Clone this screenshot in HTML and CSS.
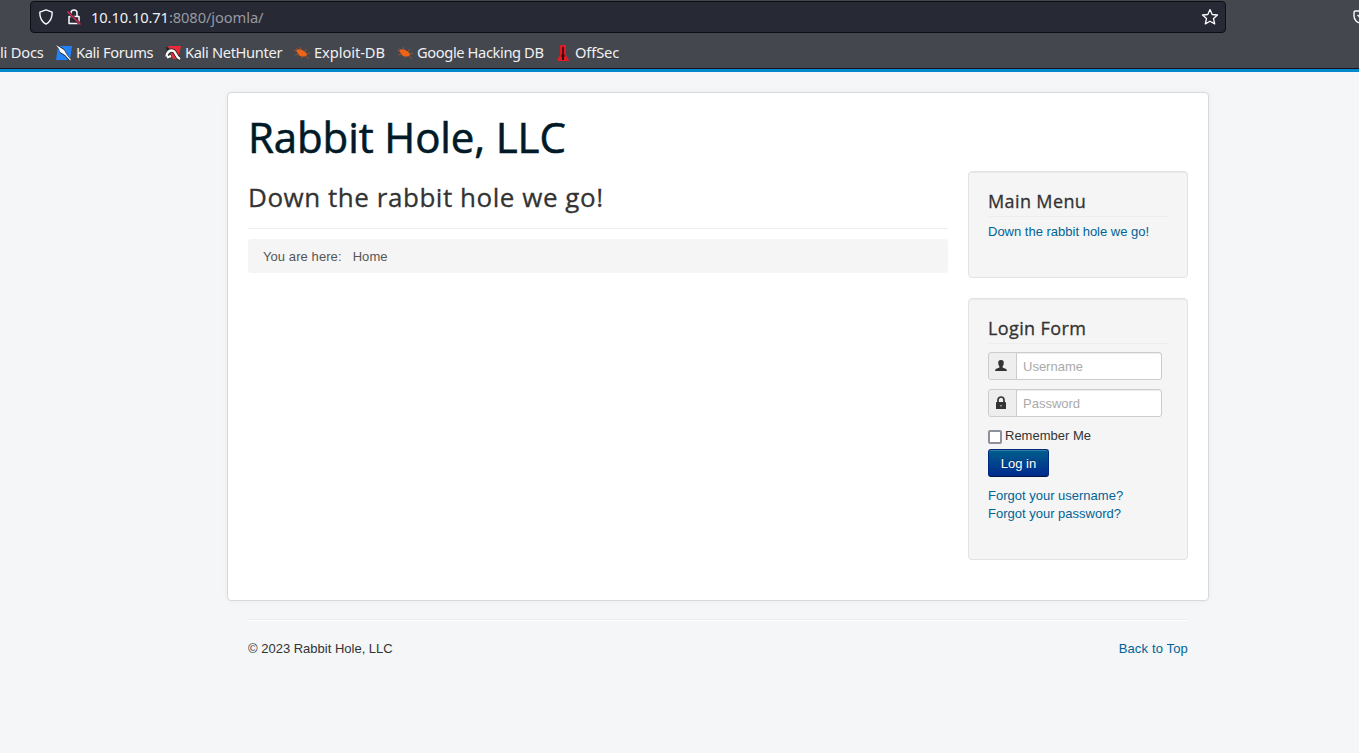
FILE: index.html
```html
<!DOCTYPE html>
<html lang="en">
<head>
<meta charset="utf-8">
<title>Home</title>
<link rel="stylesheet" href="styles.css">
</head>
<body>
<header class="browser">
  <div class="toolbar">
    <div class="urlbar">
      <svg class="shield" width="16" height="16" viewBox="0 0 16 16"><path d="M8 .9 14.2 3.2C14.3 8.400 12.300 12.700 8 15.100 3.700 12.700 1.700 8.400 1.800 3.200z" fill="none" stroke="#fbfbfe" stroke-width="1.400" stroke-linejoin="round"/></svg>
      <svg class="insecure" width="16" height="16" viewBox="0 0 16 16"><path d="M5 7V4a3 3 0 0 1 6 0v3M3 7.500h10v7H3z" fill="none" stroke="#fbfbfe" stroke-width="1.500" stroke-linejoin="round"/><path d="m1.500 2.500 13 13" stroke="#272935" stroke-width="3"/><path d="m1.500 2.500 13 13" stroke="#e22850" stroke-width="1.500"/></svg>
      <span class="url"><b>10.10.10.71</b><span>:8080/joomla/</span></span>
      <svg class="star" width="18" height="18" viewBox="0 0 18 18"><path d="m9 1.600 2.200 4.900 5.300.5-4 3.500 1.200 5.400L9 13.200l-4.700 2.700 1.200-5.400-4-3.500 5.300-.5z" fill="none" stroke="#fbfbfe" stroke-width="1.300" stroke-linejoin="round"/></svg>
    </div>
    <svg class="pocket" width="16" height="16" viewBox="0 0 16 16"><path d="M2.500 2h11q1.500 0 1.500 1.500v3.500a7 7 0 0 1-14 0V3.500Q1 2 2.500 2zM4.500 6 8 9l3.500-3" fill="none" stroke="#fbfbfe" stroke-width="1.400"/></svg>
  </div>
  <nav class="bookmarks">
    <span class="bookmark docs">li Docs</span>
    <span class="bookmark forums"><svg width="16" height="16" viewBox="0 0 16 16"><path d="M2 1h14l-2 14H0z" fill="#2383f6"/><path d="M0 0 5 2l3 2 3 5 4 6-2 1-4-5-5-3-1-3z" fill="#222"/><path d="m0 0 5 3 3 2 3 5 4 5-1 .5-5-5.500-5-3L3 4z" fill="#fff"/></svg>Kali Forums</span>
    <span class="bookmark hunter"><svg width="16" height="16" viewBox="0 0 16 16"><path d="M3 1h13l-3 13H8z" fill="#ed2938"/><path d="M0 2 4 3 3 6z" fill="#222"/><path d="M1.500 11.500C2 5 8 4 10 7.500c1 2 2 5 5 6.500" fill="none" stroke="#222" stroke-width="4"/><path d="M1.500 11.500C2 5 8 4 10 7.500c1 2 2 5 5 6.500M2 12.500l4-1.500" fill="none" stroke="#fff" stroke-width="2.400"/></svg>Kali NetHunter</span>
    <span class="bookmark exploit"><svg width="16" height="16" viewBox="0 0 16 16"><path d="M2 5.500C4 4 6 4 8 5c3 1 5 3 5 5-2 2-6 2-8 0z" fill="#f06418"/><path d="m4 5-2-2m5 2-1-3m5 4 2-2m0 5 3-1m-4 3 3 3m-6-3-1 2m-3-4-4 1m1-4-3-1" stroke="#b95727" stroke-width=".7"/></svg>Exploit-DB</span>
    <span class="bookmark google"><svg width="16" height="16" viewBox="0 0 16 16"><path d="M2 5.500C4 4 6 4 8 5c3 1 5 3 5 5-2 2-6 2-8 0z" fill="#f06418"/><path d="m4 5-2-2m5 2-1-3m5 4 2-2m0 5 3-1m-4 3 3 3m-6-3-1 2m-3-4-4 1m1-4-3-1" stroke="#b95727" stroke-width=".7"/></svg>Google Hacking DB</span>
    <span class="bookmark offsec"><svg width="16" height="16" viewBox="0 0 16 16"><path d="M5 0h6v10l3.500 6h-13L5 10z" fill="#df1b24"/><path d="M7.200 2h1.600v7L10 11l-1 1v3H7v-3l-1-1 1.200-2z" fill="#350b10"/></svg>OffSec</span>
  </nav>
</header>
<main class="site">
  <div class="container">
    <h1 class="brand">Rabbit Hole, LLC</h1>
    <div class="columns">
      <section class="content">
        <h2 class="page-title">Down the rabbit hole we go!</h2>
        <div class="breadcrumb"><span>You are here:</span><span>Home</span></div>
      </section>
      <aside class="sidebar">
        <section class="well menu">
          <h3>Main Menu</h3>
          <a>Down the rabbit hole we go!</a>
        </section>
        <section class="well login">
          <h3>Login Form</h3>
          <div class="field"><span class="addon"><svg width="12" height="12" viewBox="0 0 12 12"><path d="M6 0C3.500 0 3 1.500 3.300 3.700 3.500 5.500 4.500 6 4.500 7 4.500 8 1 8.200.5 9.500L0 11h12l-.5-1.500C11 8.200 7.500 8 7.500 7c0-1 1-1.500 1.200-3.300C9 1.500 8.500 0 6 0z" fill="#333"/></svg></span><input type="text" placeholder="Username"></div>
          <div class="field"><span class="addon"><svg width="12" height="14" viewBox="0 0 12 14"><path d="M3 6V4a3 3 0 0 1 6 0v2" fill="none" stroke="#333" stroke-width="1.700"/><rect x="1" y="6" width="10" height="7" rx=".6" fill="#333"/><path d="M5.500 9h1v1.500h-1z" fill="#eee"/></svg></span><input type="password" placeholder="Password"></div>
          <label class="remember"><span class="box"></span>Remember Me</label>
          <button class="submit">Log in</button>
          <div class="links"><a>Forgot your username?</a><a>Forgot your password?</a></div>
        </section>
      </aside>
    </div>
  </div>
  <footer class="footer"><span>© 2023 Rabbit Hole, LLC</span><a>Back to Top</a></footer>
</main>
</body>
</html>
```
FILE: styles.css
```css
* { box-sizing: border-box; }
body { margin: 0; height: 753px; overflow: hidden; background: #f4f6f7; color: #333; font: 13px/18px "Liberation Sans", Arial, sans-serif; }
h1, h2, h3 { margin: 0; font-family: "Open Sans", sans-serif; font-weight: 400; -webkit-text-stroke: .3px currentColor; }
svg { display: block; flex: none; }
a { color: #006496; }
.browser { height: 69px; background: #44474d; border-bottom: 1px solid #121419; overflow: hidden; font-family: "Noto Sans", sans-serif; color: #f0f0f3; }
.toolbar { display: flex; height: 36px; padding: 1px 0 0 30px; overflow: hidden; }
.urlbar { display: flex; align-items: center; flex: none; width: 1196px; height: 32px; padding: 0 6px 0 7px; background: #272935; border: 1px solid #0d0e13; border-radius: 4px; }
.insecure { margin-left: 12px; }
.url { margin-left: 9px; font-size: 14.700px; line-height: 20px; letter-spacing: -.1px; white-space: nowrap; }
.url b { font-weight: 400; }
.url span { color: #989aa1; }
.star { margin-left: auto; }
.pocket { margin: 8px 0 0 127px; }
.bookmarks { display: flex; height: 31px; align-items: center; font-size: 14.700px; letter-spacing: -.36px; white-space: nowrap; }
.bookmark { display: flex; align-items: center; gap: 4px; flex: none; }
.bookmark svg { margin-top: 2px; }
.docs { width: 56px; letter-spacing: -.2px; }
.forums { width: 109px; }
.hunter { width: 129px; }
.exploit { width: 103px; letter-spacing: -.08px; }
.google { width: 158px; letter-spacing: -.4px; }
.offsec { letter-spacing: -.15px; }
.site { border-top: 3px solid #0088cc; padding: 20px 150px 0 227px; height: 684px; }
.container { width: 982px; height: 509px; padding: 20px; background: #fff; border: 1px solid #d8d9da; border-radius: 4px; box-shadow: 0 0 6px rgba(0,0,0,.05); }
.brand { height: 58px; color: #001a27; font-size: 42px; line-height: 48px; letter-spacing: -.12px; -webkit-text-stroke-width: .6px; }
.columns { display: flex; gap: 20px; }
.content { width: 700px; }
.page-title { height: 58px; padding-top: 8px; border-bottom: 1px solid #eee; font-size: 26px; line-height: 36px; letter-spacing: .54px; }
.breadcrumb { display: flex; gap: 11px; height: 34px; margin-top: 10px; padding: 9px 15px 7px; background: #f5f5f5; border-radius: 4px; color: #555; letter-spacing: .08px; }
.sidebar { width: 220px; }
.well { padding: 19px; background: #f5f5f5; border: 1px solid #e3e3e3; border-radius: 4px; box-shadow: inset 0 1px 1px rgba(0,0,0,.05); }
.menu { height: 107px; margin-bottom: 20px; }
.login { height: 262px; }
.well h3 { height: 26px; margin-bottom: 6px; border-bottom: 1px solid #eee; font-size: 18px; line-height: 20px; letter-spacing: .38px; }
.login h3 { margin-bottom: 8px; }
.field { display: flex; width: 174px; height: 28px; margin-bottom: 9px; }
.addon { display: flex; align-items: center; padding-left: 6px; width: 29px; background: #eee; border: 1px solid #ccc; border-radius: 3px 0 0 3px; }
.field input { width: 146px; margin-left: -1px; padding: 6px 6px 4px; border: 1px solid #ccc; border-radius: 0 3px 3px 0; background: #fff; box-shadow: inset 0 1px 1px rgba(0,0,0,.075); font: inherit; }
.field input::placeholder { color: #aaa; opacity: 1; }
.remember { display: flex; height: 23px; padding-top: 1px; gap: 3px; }
.box { width: 14px; height: 14px; margin-top: 3px; border: 2px solid #8f8f9d; border-radius: 2px; background: #fff; }
.submit { display: block; width: 61px; height: 28px; padding: 2px 0 0; border: 1px solid #002a80; border-bottom-color: #001540; border-radius: 3px; background: linear-gradient(#005e8d, #002a8d); box-shadow: inset 0 1px 0 rgba(255,255,255,.2); color: #fff; font: inherit; text-shadow: 0 -1px 0 rgba(0,0,0,.25); }
.links { display: flex; flex-direction: column; margin-top: 10px; }
.footer { display: flex; justify-content: space-between; width: 940px; margin: 18px 0 0 21px; padding-top: 20px; border-top: 1px solid #eaebed; box-shadow: inset 0 1px #fff; }
.footer a { letter-spacing: .15px; }
```
